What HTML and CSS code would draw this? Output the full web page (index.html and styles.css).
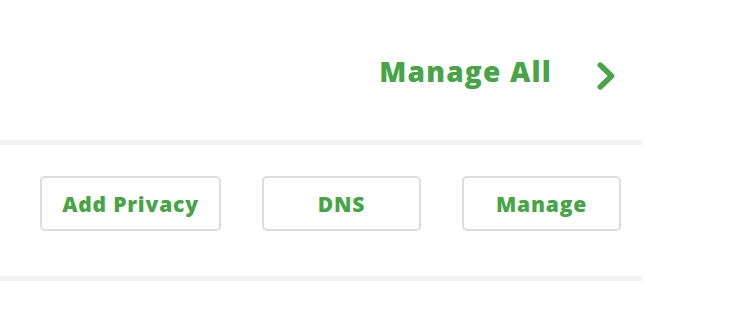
FILE: index.html
```html
<!DOCTYPE html>
<html lang="en">
<head>
<meta charset="utf-8">
<title>Manage</title>
<link rel="stylesheet" href="styles.css">
</head>
<body>
<div class="panel">
  <div class="header">
    <a class="manage-all" href="#">Manage All</a>
    <svg class="chevron" width="18" height="28" viewBox="0 0 18 28" aria-hidden="true">
      <path d="M3.2 3 L14.6 14 L3.2 25" fill="none" stroke="#47a447" stroke-width="5.4" stroke-linecap="round" stroke-linejoin="round"/>
    </svg>
  </div>
  <div class="actions">
    <button class="btn btn-wide">Add Privacy</button>
    <button class="btn">DNS</button>
    <button class="btn">Manage</button>
  </div>
</div>
</body>
</html>
```

FILE: styles.css
```css
html, body {
  margin: 0;
  padding: 0;
  background: #ffffff;
}

body {
  font-family: "Open Sans", "Liberation Sans", sans-serif;
  color: #47a447;
}

.panel {
  width: 642px;
}

.header {
  height: 140px;
  display: flex;
  align-items: center;
  justify-content: flex-end;
  padding-right: 27px;
  gap: 46px;
  border-bottom: 5px solid #f2f2f2;
}

.manage-all {
  font-size: 28px;
  font-weight: 800;
  color: #47a447;
  text-decoration: none;
  letter-spacing: 1.2px;
  margin-top: 2px;
  margin-right: -1px;
}

.chevron {
  display: block;
  margin-top: 12px;
}

.actions {
  display: flex;
  justify-content: flex-end;
  gap: 41px;
  padding: 31px 21px 45px 0;
  border-bottom: 5px solid #f2f2f2;
}

.btn {
  height: 55px;
  min-width: 159px;
  box-sizing: border-box;
  padding: 0 20px;
  background: #ffffff;
  border: 2px solid #dddddd;
  border-radius: 5px;
  font-family: "Open Sans", "Liberation Sans", sans-serif;
  font-size: 21px;
  font-weight: 800;
  color: #47a447;
  letter-spacing: 0.8px;
  cursor: pointer;
}

.btn-wide {
  min-width: 181px;
}
```
